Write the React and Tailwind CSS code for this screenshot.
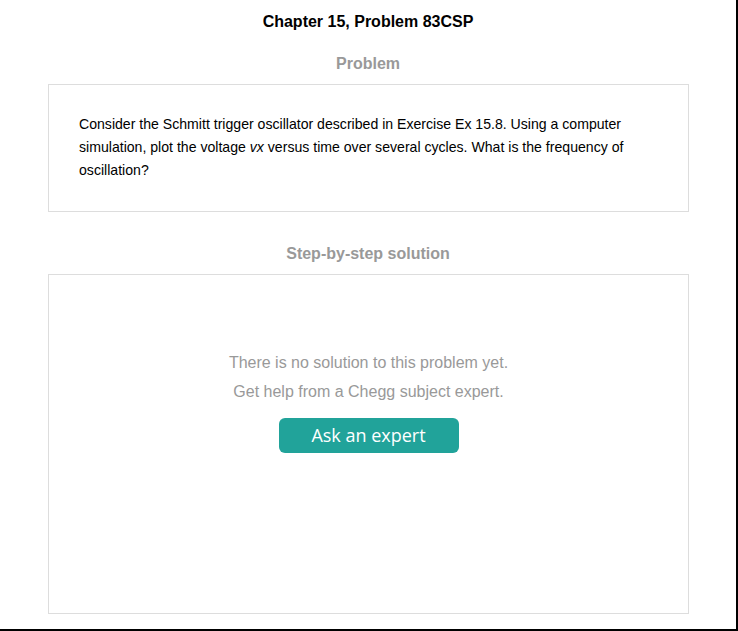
export default function App() {
  return (
    <div className="w-[738px] h-[631px] border-r-2 border-b-2 border-black bg-white font-['Liberation_Sans',Arial,sans-serif] box-border">
      <h1 className="pt-[13px] text-center text-[16px] leading-[18px] font-bold text-black">
        Chapter 15, Problem 83CSP
      </h1>
      <h2 className="mt-[24px] text-center text-[16px] leading-[18px] font-bold text-[#999999]">
        Problem
      </h2>
      <div className="ml-[48px] mt-[11px] w-[641px] h-[128px] border border-[#dddddd] pl-[30px] pr-[30px] pt-[28px]">
        <p className="text-[14.1px] leading-[23px] text-black">
          Consider the Schmitt trigger oscillator described in Exercise Ex 15.8. Using a computer simulation, plot the voltage <i>vx</i> versus time over several cycles. What is the frequency of oscillation?
        </p>
      </div>
      <h2 className="mt-[33px] text-center text-[16px] leading-[18px] font-bold text-[#999999]">
        Step-by-step solution
      </h2>
      <div className="ml-[48px] mt-[11px] w-[641px] h-[340px] border border-[#dddddd] flex flex-col items-center pt-[73px]">
        <p className="text-[16px] leading-[29px] text-[#999999]">There is no solution to this problem yet.</p>
        <p className="text-[16px] leading-[29px] text-[#999999]">Get help from a Chegg subject expert.</p>
        <button className="mt-[12px] w-[180px] h-[35px] rounded-[6px] bg-[#21a39a] text-white font-['Open_Sans',sans-serif] text-[18px] leading-[35px]">
          Ask an expert
        </button>
      </div>
    </div>
  );
}
